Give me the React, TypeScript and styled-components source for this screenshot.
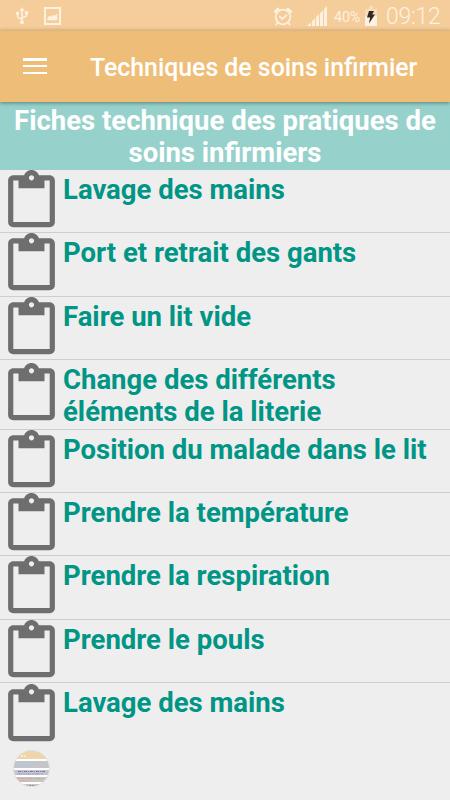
import React from 'react';
import styled, { createGlobalStyle } from 'styled-components';

const GlobalStyle = createGlobalStyle`
  * { box-sizing: border-box; }
  html, body { margin: 0; background: #eeeeee; }
  body { font-family: Roboto, sans-serif; }
`;

const Screen = styled.div`
  display: flex;
  flex-direction: column;
  width: 450px;
  height: 800px;
  overflow: hidden;
  background: #eeeeee;
`;

const StatusBar = styled.div`
  display: flex;
  flex: none;
  align-items: center;
  height: 30px;
  padding: 2px 9px 0 15px;
  background: #f5cd9a;
  color: #fdf1e1;
  svg { display: block; flex: none; }
`;

const Spacer = styled.div<{ $w?: number }>`
  flex: ${p => (p.$w ? `0 0 ${p.$w}px` : '1')};
`;

const BatteryText = styled.span`
  width: 28px;
  padding-top: 1px;
  font-size: 14.3px;
  letter-spacing: -0.1px;
  white-space: nowrap;
`;

const Clock = styled.span`
  width: 55px;
  padding-top: 2px;
  font-size: 23px;
  font-weight: 300;
  line-height: 28px;
  letter-spacing: -0.3px;
  white-space: nowrap;
`;

const AppBar = styled.header`
  position: relative;
  z-index: 1;
  display: flex;
  flex: none;
  align-items: center;
  height: 72px;
  padding-left: 23px;
  background: linear-gradient(#dcb380, #eebe78 2px);
  box-shadow: 0 1px 4px rgba(0, 0, 0, 0.4);
`;

const MenuButton = styled.button`
  display: flex;
  flex-direction: column;
  justify-content: space-between;
  width: 24px;
  height: 16px;
  margin: 0 43px 0 0;
  padding: 0;
  border: 0;
  background: none;
`;

const MenuLine = styled.span`
  height: 2.5px;
  background: #fff;
`;

const AppTitle = styled.h1`
  margin: 3px 0 0;
  color: #fff;
  font-size: 24.85px;
  font-weight: 500;
  line-height: 32px;
  white-space: nowrap;
`;

const ListHeading = styled.h2`
  flex: none;
  height: 68px;
  margin: 0;
  padding-top: 3px;
  background: #96d2cb;
  color: #fff;
  font-size: 27.5px;
  font-weight: 700;
  line-height: 32px;
  text-align: center;
  white-space: nowrap;
`;

const List = styled.ul`
  flex: none;
  margin: 0;
  padding: 0;
  list-style: none;
`;

const Row = styled.li<{ $tall?: boolean }>`
  display: flex;
  align-items: center;
  height: ${p => (p.$tall ? 70 : 63.3)}px;
  border-bottom: 1px solid #cecece;
  &:last-child { border-bottom: 0; }
  svg { display: block; flex: none; }
`;

const RowText = styled.span`
  align-self: flex-start;
  padding-top: 4px;
  color: #009585;
  font-size: 27.5px;
  font-weight: 700;
  line-height: 32px;
  white-space: pre-line;
`;

const Bubble = styled.div`
  width: 37px;
  height: 37px;
  margin: 4px 0 0 13px;
  svg { display: block; }
`;

const UsbIcon = () => (
  <svg width="14" height="20" viewBox="0 0 14 20" fill="none" stroke="currentColor" strokeWidth="1.5">
    <path d="M7 4v12M2.5 8v2.5c0 1.5 4.5 2 4.5 3.5M11.5 7v2.5C11.5 11 7 11 7 12.5" />
    <path d="M7 1l2.4 4H4.6z" fill="currentColor" stroke="none" />
    <circle cx="7" cy="16.3" r="1.9" fill="currentColor" stroke="none" />
    <circle cx="2.6" cy="7.2" r="1.7" fill="currentColor" stroke="none" />
    <path d="M9.8 5.2h3.4v3.4H9.8z" fill="currentColor" stroke="none" />
  </svg>
);

const PictureIcon = () => (
  <svg width="17" height="18" viewBox="0 0 17 18">
    <rect x="1" y="1" width="15" height="16" fill="none" stroke="currentColor" strokeWidth="2" />
    <path d="M3.3 13.2V11l2.7-2.5 1.6 1.2 2.2-2 1.2 1 2.3-2.2v6.7z" fill="currentColor" />
  </svg>
);

const AlarmIcon = () => (
  <svg width="20" height="21" viewBox="0 0 20 21" fill="none" stroke="currentColor" strokeWidth="1.7">
    <circle cx="10" cy="11" r="7.3" />
    <path d="M6.3 10.2l3 2.8 4.7-4.2M4.6 16.6L2.9 19M15.4 16.6l1.7 2.4" />
    <path d="M1.3 6.2L6 2.2M18.7 6.2L14 2.2" strokeWidth="2.5" />
  </svg>
);

const SignalIcon = () => (
  <svg width="21" height="20" viewBox="0 0 21 20" fill="currentColor">
    <path d="M0 20l4-3.5V20zM5 20v-4.7l3-3V20zM9 20v-9l3-2.7V20zM13 20V7.3l3-3V20zM17 20V3.2L20 0v20z" />
  </svg>
);

const BatteryIcon = () => (
  <svg width="12" height="20" viewBox="0 0 12 20">
    <path d="M0 3h4V0h4v3h4v7H0z" fill="#f7ddbb" />
    <path d="M0 10h12v10H0z" fill="#fdf1e1" />
    <path d="M4 5h5L7.2 8.5H10L4 17.5l1.1-6H2z" fill="#302b20" />
  </svg>
);

const ClipboardIcon = () => (
  <svg width="63" height="62.4" viewBox="0 0 24 24" preserveAspectRatio="xMidYMid" fill="#6e6e6e">
    <path d="M19 2h-4.18C14.4.84 13.3 0 12 0c-1.3 0-2.4.84-2.82 2H5c-1.1 0-2 .9-2 2v16c0 1.1.9 2 2 2h14c1.1 0 2-.9 2-2V4c0-1.1-.9-2-2-2zm-7 0c.55 0 1 .45 1 1s-.45 1-1 1-1-.45-1-1 .45-1 1-1zm7 18H5V4h2v3h10V4h2v16z" />
  </svg>
);

const PreviewIcon = () => (
  <svg width="37" height="37" viewBox="0 0 37 37">
    <defs>
      <clipPath id="disc"><circle cx="18.5" cy="18.5" r="18" /></clipPath>
    </defs>
    <g clipPath="url(#disc)">
      <path fill="#fff" d="M0 0h37v37H0z" />
      <path fill="#f0d4aa" d="M0 0h37v9H0z" />
      <path fill="#c5c5c8" d="M0 11h37v7H0zM0 20h37v5H0zM0 27h37v5H0zM0 34h37v3H0z" />
      <path stroke="#fff" strokeDasharray="2 1" d="M8 6h5" />
      <g fill="none" strokeWidth="1">
        <path stroke="#a5c7e5" strokeDasharray="3 1 1 1" d="M1 13h17M2 16h18" />
        <path stroke="#7775cf" strokeDasharray="3 1 1 1" d="M5 21.5h27" />
        <path stroke="#a29ae4" strokeDasharray="5 1 2 1" d="M4 24h27" />
        <path stroke="#dfa58c" strokeDasharray="2 1 4 1" d="M4 28.5h25M6 31h10" />
        <path stroke="#85858a" strokeDasharray="2 1" d="M13 35.5h12" />
      </g>
    </g>
    <circle cx="18.5" cy="18.5" r="18" fill="none" stroke="#dce1e5" />
  </svg>
);

const techniques = [
  'Lavage des mains',
  'Port et retrait des gants',
  'Faire un lit vide',
  'Change des différents\néléments de la literie',
  'Position du malade dans le lit',
  'Prendre la température',
  'Prendre la respiration',
  'Prendre le pouls',
  'Lavage des mains',
];

export default function App() {
  return (
    <>
      <GlobalStyle />
      <Screen>
        <StatusBar>
          <UsbIcon />
          <Spacer $w={15} />
          <PictureIcon />
          <Spacer />
          <AlarmIcon />
          <Spacer $w={14} />
          <SignalIcon />
          <Spacer $w={6} />
          <BatteryText>40%</BatteryText>
          <Spacer $w={3} />
          <BatteryIcon />
          <Spacer $w={9} />
          <Clock>09:12</Clock>
        </StatusBar>
        <AppBar>
          <MenuButton aria-label="Menu">
            <MenuLine />
            <MenuLine />
            <MenuLine />
          </MenuButton>
          <AppTitle>Techniques de soins infirmier</AppTitle>
        </AppBar>
        <ListHeading>
          Fiches technique des pratiques de<br />soins infirmiers
        </ListHeading>
        <List>
          {techniques.map((name, i) => (
            <Row key={i} $tall={name.includes('\n')}>
              <ClipboardIcon />
              <RowText>{name}</RowText>
            </Row>
          ))}
        </List>
        <Bubble>
          <PreviewIcon />
        </Bubble>
      </Screen>
    </>
  );
}
